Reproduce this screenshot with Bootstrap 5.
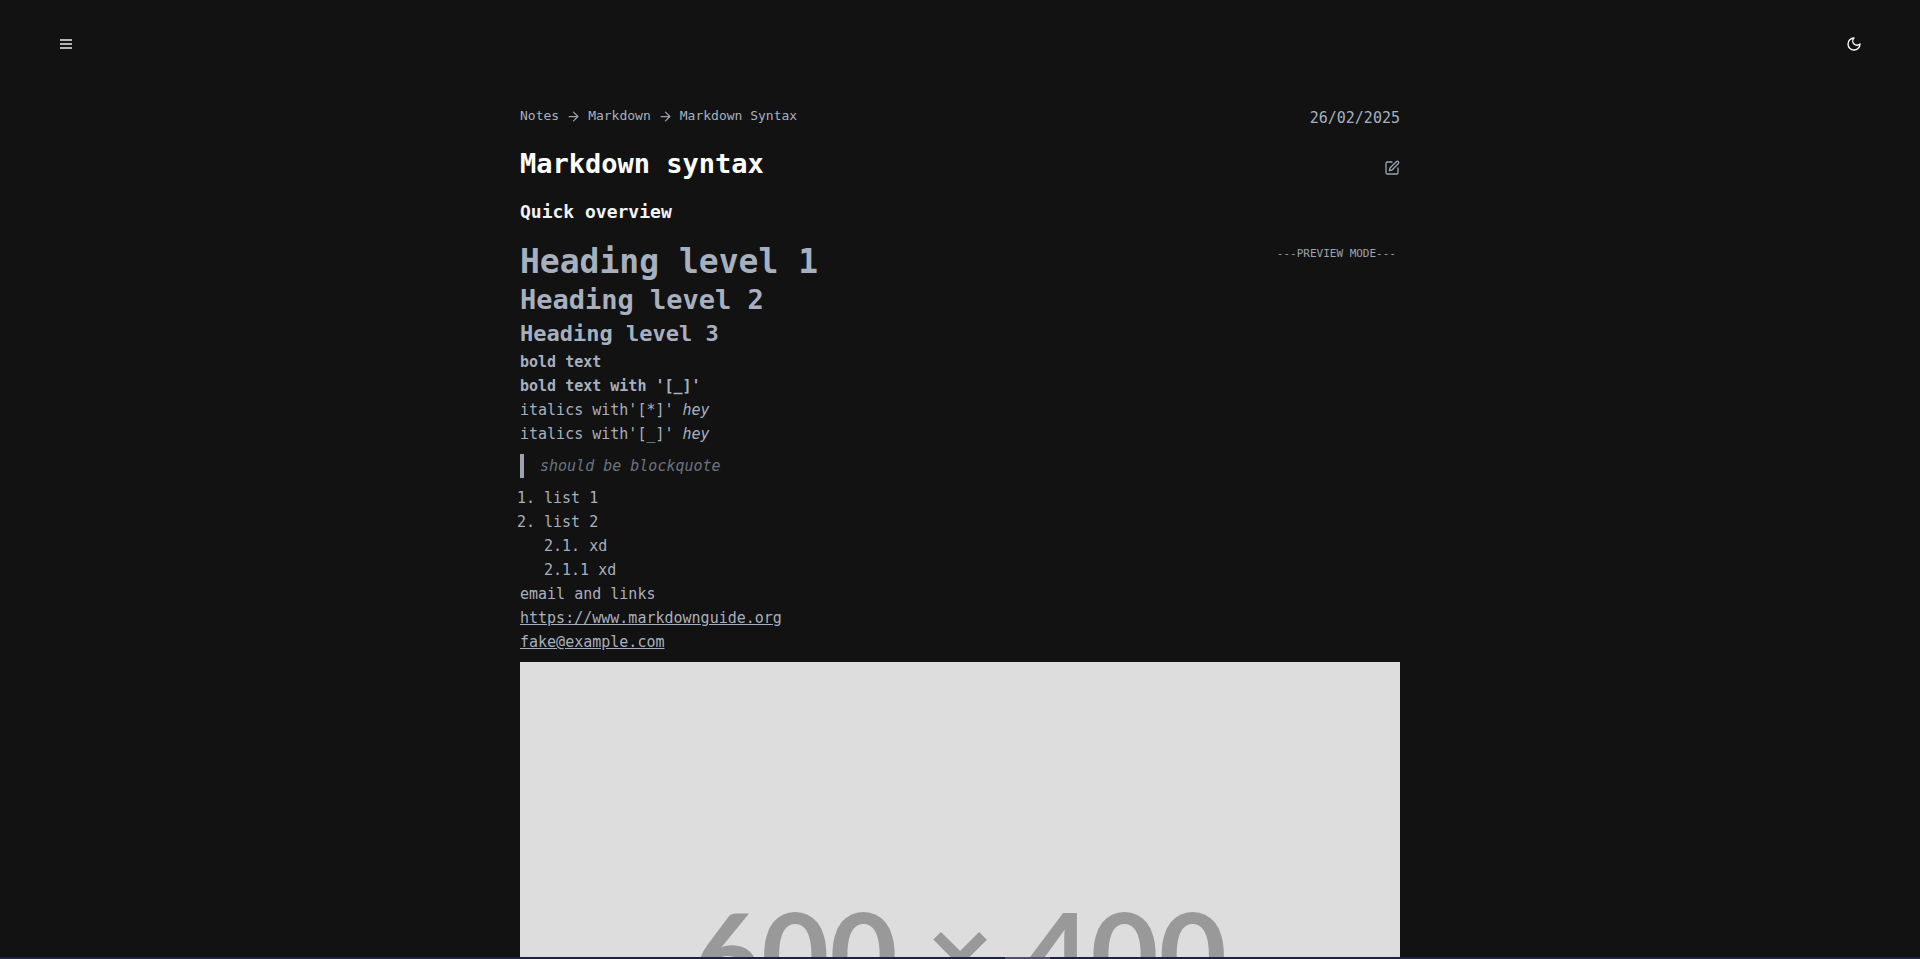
<!DOCTYPE html>
<html lang="en" data-bs-theme="dark">
<head>
<meta charset="utf-8">
<meta name="viewport" content="width=device-width, initial-scale=1">
<title>Markdown syntax</title>
<link href="https://cdn.jsdelivr.net/npm/bootstrap@5.3.0/dist/css/bootstrap.min.css" rel="stylesheet">
<script src="https://cdn.jsdelivr.net/npm/bootstrap@5.3.0/dist/js/bootstrap.bundle.min.js" defer></script>
<style>
  body { background: #121212; color: #a7b0bf; font: 15px/24px "DejaVu Sans Mono", monospace; }
  .page-scroll { scrollbar-width: none; }
  .page-scroll::-webkit-scrollbar { display: none; }
  .top-bar { height: 88px; padding: 0 56px; }
  .icon-btn { width: 20px; height: 20px; padding: 0; border: 0; background: none; display: flex; align-items: center; justify-content: center; color: #b0b3b8; }
  .edit-btn { width: 16px; color: #9ca3af; }
  .note { max-width: 880px; padding-top: 14px; }
  .crumbs { font-size: 13px; line-height: 24px; gap: 7px; }
  .crumbs a { color: inherit; text-decoration: none; }
  .crumbs svg { color: #9ca3af; }
  .note-title { font-size: 27px; line-height: 36px; font-weight: 700; color: #fff; }
  .note-sub { font-size: 18px; line-height: 28px; font-weight: 700; color: #f3f4f6; margin: 16px 0; }
  .content h2 { font-size: 33px; line-height: 40px; font-weight: 700; margin: 0; }
  .content h3 { font-size: 27px; line-height: 36px; font-weight: 700; margin: 0; }
  .content h4 { font-size: 22px; line-height: 32px; font-weight: 700; margin: 0; }
  .content p { margin: 0; }
  .content h2, .content h3, .content h4 { color: inherit; }
  .content blockquote { margin: 8px 0; padding-left: 16px; border-left: 4px solid #9ca3af; color: #6b7280; font-size: 15px; font-style: italic; }
  .content ol { margin: 0; padding-left: 24px; }
  .content a { color: inherit; }
  .preview-tag { font-size: 11px; line-height: 24px; padding-right: 4px; white-space: nowrap; color: #9ca3af; }
  .placeholder-pic { display: block; width: 100%; margin-top: 8px; }
  .placeholder-pic text { font: 700 80px Lato, sans-serif; fill: #999; }
  .edge-bar { height: 2px; background: #1e2044; }
  .edge-bar span { width: 45px; height: 2px; margin-left: 52.35%; background: #504f6b; }
</style>
</head>
<body>
<div class="vh-100 overflow-auto page-scroll">
  <header class="top-bar d-flex justify-content-between align-items-center">
    <button class="icon-btn" type="button" aria-label="Menu">
      <svg width="12" height="10" viewBox="0 0 12 10" fill="currentColor"><path d="M0 0h12v2H0zM0 4h12v2H0zM0 8h12v2H0z"/></svg>
    </button>
    <button class="icon-btn text-white" type="button" aria-label="Toggle theme">
      <svg width="16" height="16" viewBox="0 0 24 24" fill="none" stroke="currentColor" stroke-width="2" stroke-linecap="round" stroke-linejoin="round"><path d="M12 3a6 6 0 0 0 9 9 9 9 0 1 1-9-9Z"/></svg>
    </button>
  </header>
  <main class="note container-fluid px-0">
    <div class="d-flex justify-content-between">
      <nav class="crumbs d-flex align-items-center" aria-label="Breadcrumb">
        <a href="#">Notes</a>
        <svg width="15" height="15" viewBox="0 0 24 24" fill="none" stroke="currentColor" stroke-width="2" stroke-linecap="round" stroke-linejoin="round"><path d="M5 12h14M12 5l7 7-7 7"/></svg>
        <a href="#">Markdown</a>
        <svg width="15" height="15" viewBox="0 0 24 24" fill="none" stroke="currentColor" stroke-width="2" stroke-linecap="round" stroke-linejoin="round"><path d="M5 12h14M12 5l7 7-7 7"/></svg>
        <a href="#">Markdown Syntax</a>
      </nav>
      <time class="pt-1" datetime="2025-02-26">26/02/2025</time>
    </div>
    <div class="d-flex justify-content-between align-items-end mt-3">
      <h1 class="note-title mb-0">Markdown syntax</h1>
      <button class="icon-btn edit-btn mb-1" type="button" aria-label="Edit note">
        <svg width="16" height="16" viewBox="0 0 24 24" fill="none" stroke="currentColor" stroke-width="2" stroke-linecap="round" stroke-linejoin="round"><path d="M12 3H5a2 2 0 0 0-2 2v14a2 2 0 0 0 2 2h14a2 2 0 0 0 2-2v-7"/><path d="M18.4 2.6a2.1 2.1 0 0 1 3 3L12 15l-4 1 1-4Z"/></svg>
      </button>
    </div>
    <p class="note-sub">Quick overview</p>
    <article class="content">
      <div class="d-flex justify-content-between">
        <h2>Heading level 1</h2>
        <span class="preview-tag">---PREVIEW MODE---</span>
      </div>
      <h3>Heading level 2</h3>
      <h4>Heading level 3</h4>
      <p><strong>bold text</strong></p>
      <p><strong>bold text with '[_]'</strong></p>
      <p>italics with'[*]' <em>hey</em></p>
      <p>italics with'[_]' <em>hey</em></p>
      <blockquote>should be blockquote</blockquote>
      <ol>
        <li>list 1</li>
        <li>list 2<br>2.1. xd<br>2.1.1 xd</li>
      </ol>
      <p>email and links</p>
      <p><a href="https://www.markdownguide.org">https://www.markdownguide.org</a></p>
      <p><a href="mailto:fake@example.com">fake@example.com</a></p>
      <svg class="placeholder-pic" viewBox="0 0 600 400" role="img" aria-label="600 × 400">
        <rect width="600" height="400" fill="#ddd"/>
        <text x="300" y="229" text-anchor="middle">600 × 400</text>
      </svg>
    </article>
  </main>
</div>
<div class="edge-bar fixed-bottom d-flex"><span></span></div>
</body>
</html>
